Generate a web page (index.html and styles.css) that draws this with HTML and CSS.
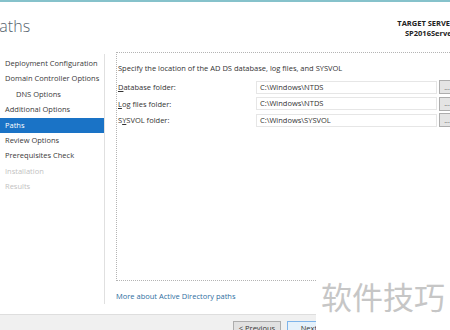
FILE: index.html
```html
<!DOCTYPE html>
<html>
<head>
    <title>Paths</title>
    <link rel="stylesheet" href="styles.css">
</head>
<body>
    <div class="page">
        <div class="topbar"></div>
        <div class="header">
            <h1 class="title">Paths</h1>
            <div class="target">
                <div>TARGET SERVER</div>
                <div>SP2016Server</div>
            </div>
        </div>

        <div class="main">
            <ul class="nav">
                <li>Deployment Configuration</li>
                <li>Domain Controller Options</li>
                <li class="sub">DNS Options</li>
                <li>Additional Options</li>
                <li class="active">Paths</li>
                <li>Review Options</li>
                <li>Prerequisites Check</li>
                <li class="off">Installation</li>
                <li class="off">Results</li>
            </ul>

            <div class="content">
                <div class="box">
                    <p class="intro">Specify the location of the AD DS database, log files, and SYSVOL</p>
                    <div class="row">
                        <label><u>D</u>atabase folder:</label>
                        <div class="field">C:\Windows\NTDS</div>
                        <button class="browse">...</button>
                    </div>
                    <div class="row">
                        <label><u>L</u>og files folder:</label>
                        <div class="field">C:\Windows\NTDS</div>
                        <button class="browse">...</button>
                    </div>
                    <div class="row">
                        <label>S<u>Y</u>SVOL folder:</label>
                        <div class="field">C:\Windows\SYSVOL</div>
                        <button class="browse">...</button>
                    </div>
                </div>
                <a class="more" href="#">More about Active Directory paths</a>
            </div>
        </div>

        <div class="footer">
            <button class="btn">&lt; Previous</button>
            <button class="btn next">Next &gt;</button>
        </div>
    </div>

    <div class="watermark">软件技巧</div>
</body>
</html>
```

FILE: styles.css
```css
html, body { margin: 0; overflow: hidden; background: #fff; }
body { font-family: "Open Sans", "Noto Sans", sans-serif; font-size: 7.5px; color: #333; width: 450px; height: 330px; position: relative; }
.page { width: 470px; }

.topbar { height: 2px; background: #86c2cb; }
.header { height: 50px; display: flex; justify-content: space-between; }
.title { margin: 14px 0 0 -10px; font-family: "Open Sans", sans-serif; font-weight: 300; font-size: 16px; color: #56636e; line-height: 20px; }
.target { margin-top: 16px; margin-right: 15px; text-align: right; font-weight: bold; font-size: 7.5px; line-height: 10px; color: #222; }

.main { display: flex; height: 262px; }
.nav { list-style: none; margin: 0; padding: 2px 0 0; width: 104px; border-right: 1px solid #e0e0e0; height: 248px; margin-top: 2px; }
.nav li { height: 15.4px; line-height: 15.4px; padding-left: 5px; white-space: nowrap; color: #3a3a3a; }
.nav li.sub { padding-left: 16px; }
.nav li.active { background: #1a73c6; color: #fff; }
.nav li.off { color: #c2c2c2; }

.content { padding-left: 11px; flex: 1; }
.box { height: 227px; border: 1px dotted #b4b4b4; border-right: none; padding: 0 0 0 1px; }
.intro { margin: 10px 0 6px; line-height: 10px; }
.row { display: flex; align-items: center; height: 16.5px; }
.row label { width: 138px; }
.field { width: 176px; height: 11px; line-height: 11px; border: 1px solid #e6e6e6; padding-left: 3px; }
.browse { margin-left: 2px; width: 16px; height: 14px; padding: 0; border: 1px solid #adadad; background: #e4e4e4; font-size: 7px; color: #555; font-family: inherit; }

.more { display: block; margin-top: 10px; color: #2f6f9f; text-decoration: none; }

.footer { height: 15px; background: #f0f0f0; border-top: 1px solid #dedede; display: flex; padding: 6px 0 0 233px; gap: 6px; }
.btn { height: 20px; padding: 0 0 7px; box-sizing: border-box; width: 48px; font-family: inherit; font-size: 7.5px; border: 1px solid #adadad; background: #e1e1e1; color: #333; align-self: flex-start; line-height: 10px; text-align: center; }
.btn.next { width: 50px; border-color: #7eb4ea; background: #e5f1fb; }

.watermark { position: absolute; left: 316px; top: 262px; width: 134px; height: 68px; background: #fff; color: #c6c6c6; font-family: "Noto Sans CJK SC", sans-serif; font-size: 31px; line-height: 68px; padding-left: 5px; box-sizing: border-box; white-space: nowrap; }
```
